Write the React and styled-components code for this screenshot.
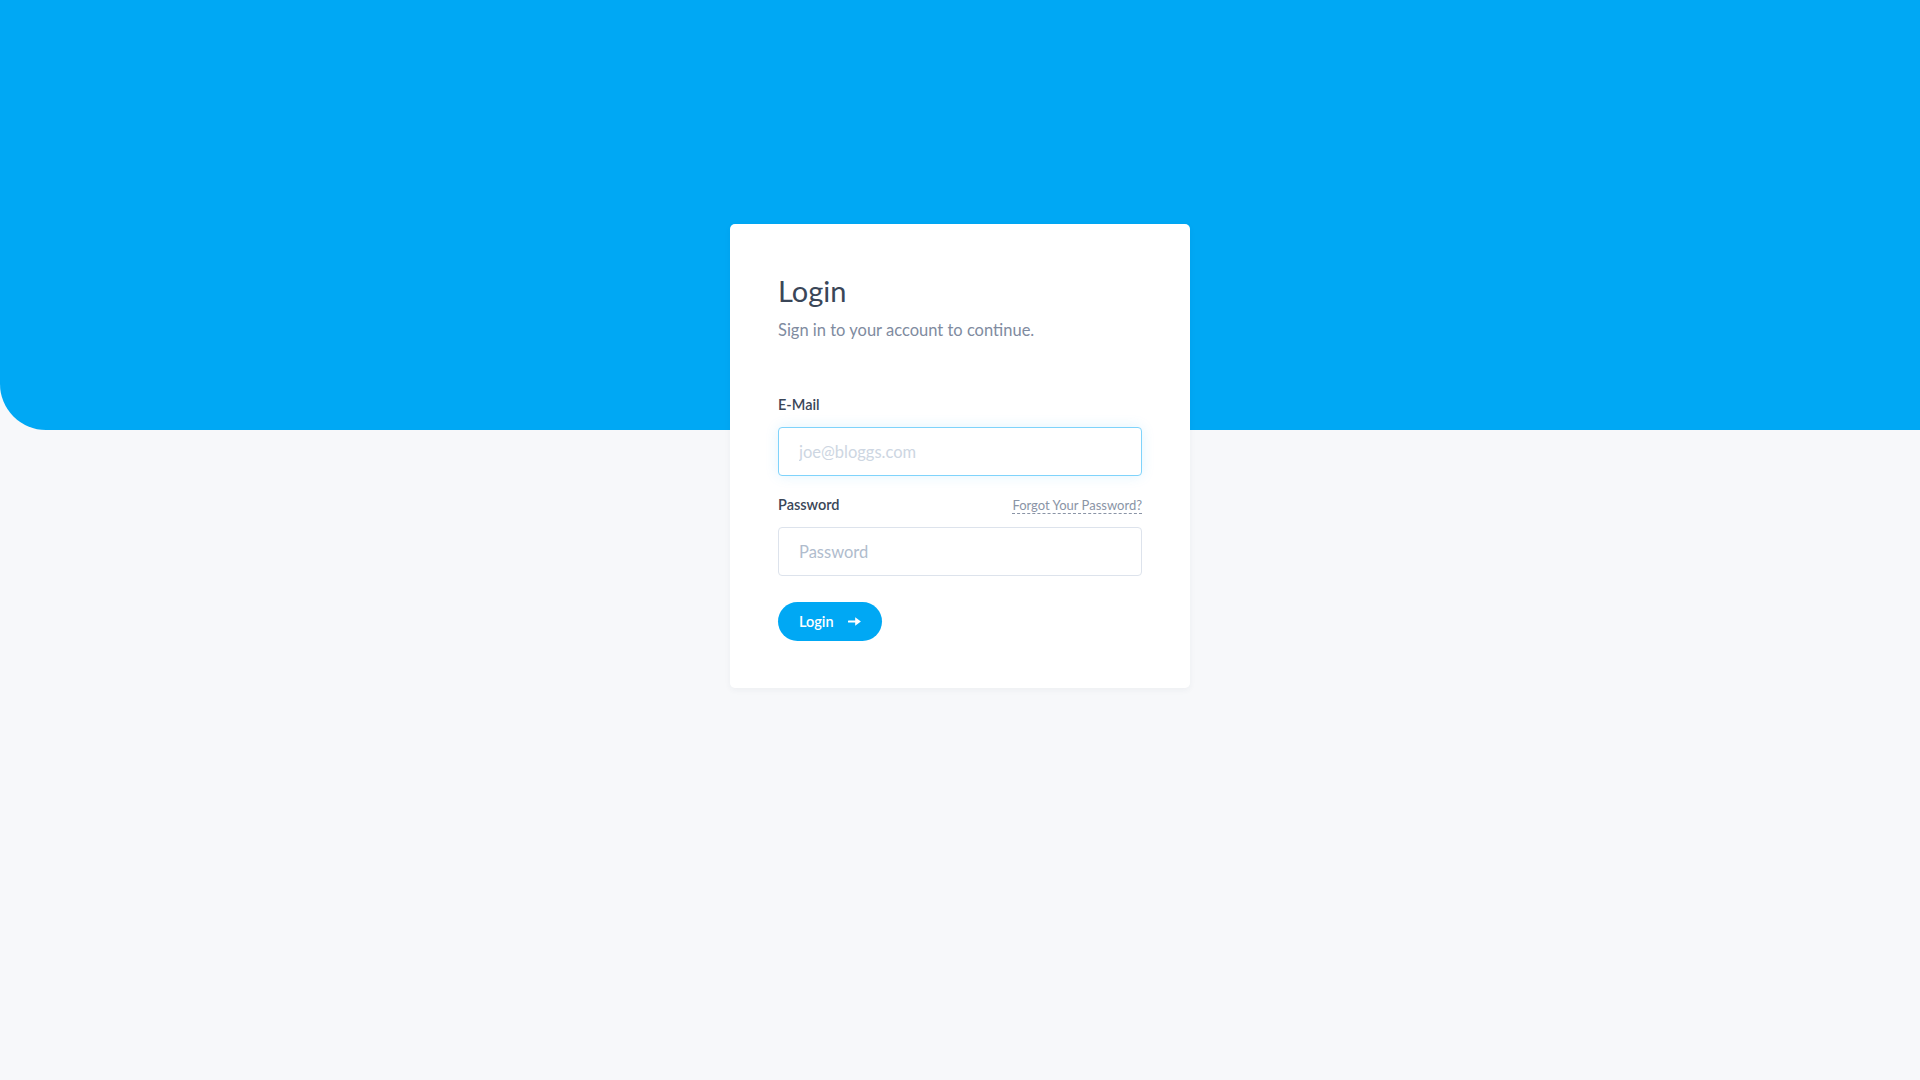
import styled, { createGlobalStyle } from "styled-components";

const GlobalStyle = createGlobalStyle`
  * { box-sizing: border-box; }
  html, body { margin: 0; padding: 0; }
  body {
    background: #f7f8fa;
    font-family: Lato, "Noto Sans", sans-serif;
    -webkit-font-smoothing: antialiased;
  }
`;

const Page = styled.div`
  position: relative;
  min-height: 100vh;
  padding-top: 224px;
  display: flex;
  justify-content: center;
  align-items: flex-start;

  &::before {
    content: "";
    position: absolute;
    top: 0;
    left: 0;
    right: 0;
    height: 430px;
    background: #00a8f4;
    border-bottom-left-radius: 46px;
  }
`;

const Card = styled.div`
  position: relative;
  width: 460px;
  background: #fff;
  border-radius: 5px;
  box-shadow: 0 2px 6px rgba(30, 50, 80, 0.05);
  padding: 48px 48px 47px;
`;

const Title = styled.h1`
  margin: 0;
  font-size: 29px;
  font-weight: 400;
  line-height: 38px;
  color: #3a4658;
`;

const Subtitle = styled.p`
  margin: 8px 0 0;
  font-size: 16.5px;
  line-height: 24px;
  color: #808ba0;
`;

const Form = styled.form`
  margin-top: 54px;
  display: flex;
  flex-direction: column;
`;

const Field = styled.div`
  display: flex;
  flex-direction: column;
  margin-bottom: ${(p) => p.$gap || 0}px;
`;

const LabelRow = styled.div`
  display: flex;
  justify-content: space-between;
  align-items: baseline;
  height: 18px;
  margin-bottom: 13px;
`;

const Label = styled.label`
  font-size: 14.5px;
  font-weight: 600;
  line-height: 18px;
  color: #3a4658;
`;

const Forgot = styled.a`
  font-size: 13px;
  line-height: 16px;
  color: #8a94a6;
  text-decoration: none;
  border-bottom: 1px dashed #8a94a6;
  cursor: pointer;
`;

const Input = styled.input`
  width: 100%;
  height: 49px;
  padding: 0 20px;
  font-family: inherit;
  font-size: 16.5px;
  color: #3a4658;
  background: #fff;
  border: 1px solid ${(p) => (p.$focused ? "#7fd3fb" : "#dde3ec")};
  border-radius: 4px;
  outline: none;
  box-shadow: ${(p) =>
    p.$focused ? "0 0 14px rgba(0, 168, 244, 0.12)" : "none"};

  &::placeholder {
    color: ${(p) => (p.$focused ? "#cdd6e2" : "#b0bccd")};
  }
`;

const Button = styled.button`
  align-self: flex-start;
  display: inline-flex;
  align-items: center;
  gap: 14px;
  height: 39px;
  padding: 0 21px;
  border: none;
  border-radius: 20px;
  background: #00a8f4;
  color: #fff;
  font-family: inherit;
  font-size: 14.5px;
  font-weight: 600;
  cursor: pointer;

  svg {
    display: block;
  }
`;

const ArrowIcon = () => (
  <svg width="13" height="9" viewBox="0 0 13 9" fill="#fff">
    <rect x="0" y="3.4" width="8" height="2.2" rx="0.6" />
    <path d="M7.2 0.3 L12.9 4.5 L7.2 8.7 Z" />
  </svg>
);

export default function App() {
  return (
    <>
      <GlobalStyle />
      <Page>
        <Card>
          <Title>Login</Title>
          <Subtitle>Sign in to your account to continue.</Subtitle>
          <Form onSubmit={(e) => e.preventDefault()}>
            <Field $gap={20}>
              <LabelRow>
                <Label htmlFor="email">E-Mail</Label>
              </LabelRow>
              <Input
                id="email"
                type="email"
                placeholder="joe@bloggs.com"
                $focused
                autoFocus
              />
            </Field>
            <Field $gap={26}>
              <LabelRow>
                <Label htmlFor="password">Password</Label>
                <Forgot>Forgot Your Password?</Forgot>
              </LabelRow>
              <Input id="password" type="password" placeholder="Password" />
            </Field>
            <Button type="submit">
              Login
              <ArrowIcon />
            </Button>
          </Form>
        </Card>
      </Page>
    </>
  );
}
